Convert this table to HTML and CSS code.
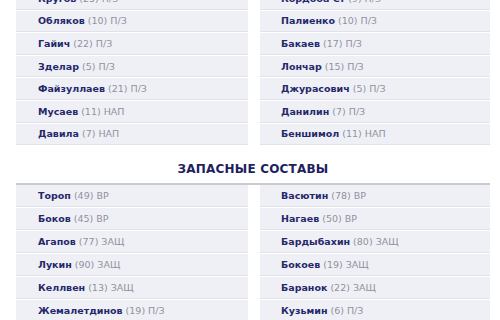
FILE: index.html
```html
<!DOCTYPE html>
<html lang="ru">
<head>
<meta charset="utf-8">
<link rel="stylesheet" href="styles.css">
</head>
<body>
<div class="page">
  <div class="grid starters">
    <div class="col">
      <div class="row"><b>Кругов</b> <span>(25) П/З</span></div>
      <div class="row"><b>Обляков</b> <span>(10) П/З</span></div>
      <div class="row"><b>Гайич</b> <span>(22) П/З</span></div>
      <div class="row"><b>Зделар</b> <span>(5) П/З</span></div>
      <div class="row"><b>Файзуллаев</b> <span>(21) П/З</span></div>
      <div class="row"><b>Мусаев</b> <span>(11) НАП</span></div>
      <div class="row"><b>Давила</b> <span>(7) НАП</span></div>
    </div>
    <div class="col">
      <div class="row"><b>Кордоба Ст</b> <span>(9) П/З</span></div>
      <div class="row"><b>Палиенко</b> <span>(10) П/З</span></div>
      <div class="row"><b>Бакаев</b> <span>(17) П/З</span></div>
      <div class="row"><b>Лончар</b> <span>(15) П/З</span></div>
      <div class="row"><b>Джурасович</b> <span>(5) П/З</span></div>
      <div class="row"><b>Данилин</b> <span>(7) П/З</span></div>
      <div class="row"><b>Беншимол</b> <span>(11) НАП</span></div>
    </div>
  </div>
  <h2 class="title">ЗАПАСНЫЕ СОСТАВЫ</h2>
  <div class="grid bench">
    <div class="col">
      <div class="row"><b>Тороп</b> <span>(49) ВР</span></div>
      <div class="row"><b>Боков</b> <span>(45) ВР</span></div>
      <div class="row"><b>Агапов</b> <span>(77) ЗАЩ</span></div>
      <div class="row"><b>Лукин</b> <span>(90) ЗАЩ</span></div>
      <div class="row"><b>Келлвен</b> <span>(13) ЗАЩ</span></div>
      <div class="row"><b>Жемалетдинов</b> <span>(19) П/З</span></div>
    </div>
    <div class="col">
      <div class="row"><b>Васютин</b> <span>(78) ВР</span></div>
      <div class="row"><b>Нагаев</b> <span>(50) ВР</span></div>
      <div class="row"><b>Бардыбахин</b> <span>(80) ЗАЩ</span></div>
      <div class="row"><b>Бокоев</b> <span>(19) ЗАЩ</span></div>
      <div class="row"><b>Баранок</b> <span>(22) ЗАЩ</span></div>
      <div class="row"><b>Кузьмин</b> <span>(6) П/З</span></div>
    </div>
  </div>
</div>
</body>
</html>
```

FILE: styles.css
```css
* { box-sizing: border-box; }
html, body { margin: 0; padding: 0; background: #fff; }
body { font-family: "DejaVu Sans", "Open Sans", sans-serif; overflow: hidden; }
.page { margin-top: -12px; padding-left: 16px; width: 490px; }
.grid { display: grid; grid-template-columns: 232px 230px; column-gap: 12px; }
.col { display: flex; flex-direction: column; gap: 1px; }
.row {
  height: 21.6px;
  background: #eff0f6;
  border-bottom: 1px solid #e1e2ea;
  display: flex;
  align-items: center;
  padding-left: 22px;
  font-size: 9.5px;
  white-space: nowrap;
}
.bench .row { height: 22px; }
.col + .col .row { padding-left: 21px; }
.row b { font-weight: 700; color: #25286a; }
.row span { color: #8f909e; margin-left: 3px; }
.title {
  margin: 0;
  padding: 17px 0 7px;
  text-align: center;
  font-size: 12px;
  font-weight: 700;
  color: #1e1f5e;
  line-height: 14px;
  letter-spacing: 0.2px;
  border-bottom: 2px solid #c9cad2;
  margin-bottom: 0;
}
```
